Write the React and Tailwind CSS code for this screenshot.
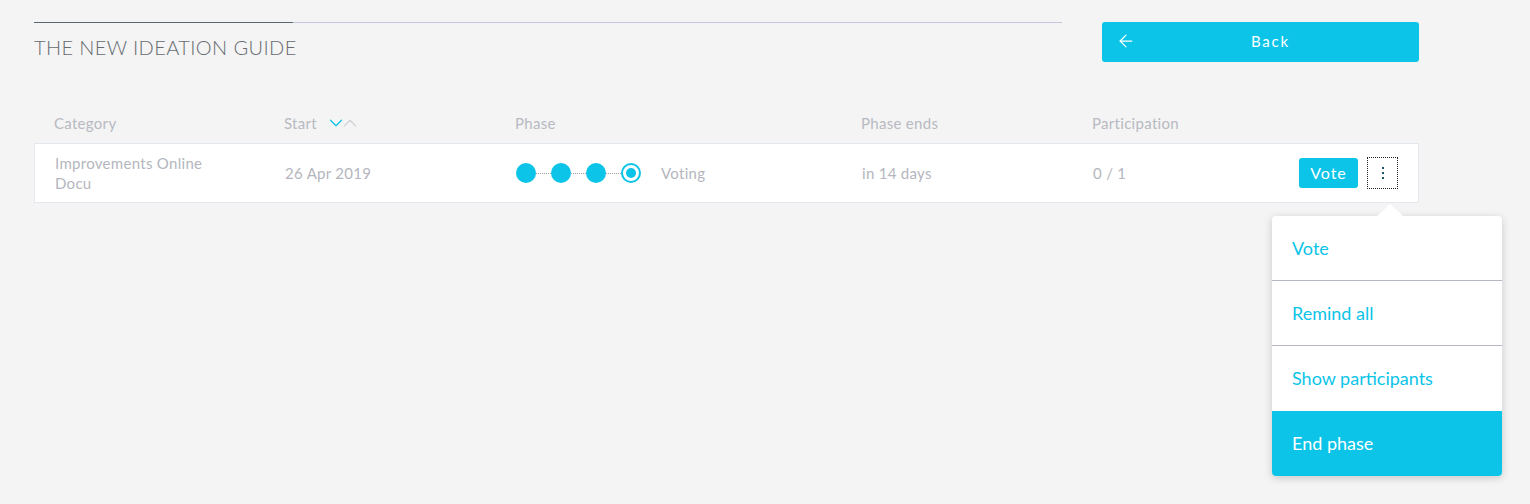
import { ArrowLeft, ChevronDown, ChevronUp } from 'lucide-react';

const font = { fontFamily: 'Lato, "Open Sans", sans-serif' };

function PhaseDots() {
  return (
    <div className="flex items-center">
      {[0, 1, 2].map((i) => (
        <div key={i} className="flex items-center">
          <span className="w-[20px] h-[20px] rounded-full bg-[#0bc4e8]" />
          <span className="w-[15px] border-t border-dotted border-[#9aa0a8]" />
        </div>
      ))}
      <span className="w-[20px] h-[20px] rounded-full border-2 border-[#0bc4e8] bg-white flex items-center justify-center">
        <span className="w-[10px] h-[10px] rounded-full bg-[#0bc4e8]" />
      </span>
    </div>
  );
}

export default function App() {
  return (
    <div className="min-h-screen bg-[#f4f4f4] text-[15px] tracking-[0.02em]" style={font}>
      <div className="flex pt-[22px] pl-[34px]">
        <div className="w-[1028px]">
          <div className="flex">
            <div className="w-[259px] h-px bg-[#5c6670]" />
            <div className="flex-1 h-px bg-[#c6c6de]" />
          </div>
          <h1 className="mt-[9px] text-[20px] font-light text-[#666b70] uppercase tracking-[0.02em]">
            The New Ideation Guide
          </h1>
        </div>
        <button className="ml-[40px] w-[317px] h-[40px] bg-[#0bc4e8] rounded-[3px] text-white flex items-center px-[14px]">
          <ArrowLeft className="w-[20px] h-[20px] -mt-[3px]" strokeWidth={1.5} />
          <span className="flex-1 text-center tracking-[0.12em] text-[15px] -mt-[2px]">Back</span>
        </button>
      </div>

      <div className="mt-[48px] ml-[34px] w-[1385px]">
        <div className="flex items-center h-[26px] text-[#b8bac2]">
          <div className="w-[250px] pl-[20px]">Category</div>
          <div className="w-[231px] flex items-center">
            Start
            <span className="ml-[8px] flex items-center">
              <ChevronDown className="w-[22px] h-[22px] text-[#0bc4e8]" strokeWidth={1.3} />
              <ChevronUp className="w-[22px] h-[22px] -ml-[8px] text-[#d0d2d8]" strokeWidth={1.3} />
            </span>
          </div>
          <div className="w-[346px]">Phase</div>
          <div className="w-[231px]">Phase ends</div>
          <div>Participation</div>
        </div>

        <div className="relative mt-[7px] h-[60px] bg-white border border-[#e2e8ee] flex items-center text-[#b4b6be]">
          <div className="w-[250px] pl-[20px] leading-[20px]">
            Improvements Online
            <br />
            Docu
          </div>
          <div className="w-[231px]">26 Apr 2019</div>
          <div className="w-[346px] flex items-center">
            <PhaseDots />
            <span className="ml-[20px]">Voting</span>
          </div>
          <div className="w-[231px]">in 14 days</div>
          <div className="flex-1">0 / 1</div>
          <button className="h-[30px] w-[59px] rounded-[3px] bg-[#0bc4e8] text-white text-[16px] tracking-[0.06em]">
            Vote
          </button>
          <button className="ml-[9px] mr-[20px] w-[31px] h-[32px] border border-dotted border-[#222] flex flex-col items-center justify-center gap-[3px]">
            <span className="w-[2px] h-[2px] bg-[#1c5a6a]" />
            <span className="w-[2px] h-[2px] bg-[#1c5a6a]" />
            <span className="w-[2px] h-[2px] bg-[#1c5a6a]" />
          </button>

          <div className="absolute right-[-84px] top-[72px] w-[230px] bg-white rounded-[4px] shadow-[0_2px_8px_rgba(0,0,0,0.18)] text-[18px] tracking-normal">
            <span className="absolute -top-[12px] right-[98px] w-0 h-0 border-l-[14px] border-r-[14px] border-b-[13px] border-l-transparent border-r-transparent border-b-white" />
            <div className="h-[65px] flex items-center px-[20px] text-[#0bc4e8] border-b border-[#b4b8c0]">Vote</div>
            <div className="h-[65px] flex items-center px-[20px] text-[#0bc4e8] border-b border-[#b4b8c0]">Remind all</div>
            <div className="h-[65px] flex items-center px-[20px] text-[#0bc4e8]">Show participants</div>
            <div className="h-[65px] flex items-center px-[20px] text-white bg-[#0bc4e8] rounded-b-[4px]">End phase</div>
          </div>
        </div>
      </div>
    </div>
  );
}
